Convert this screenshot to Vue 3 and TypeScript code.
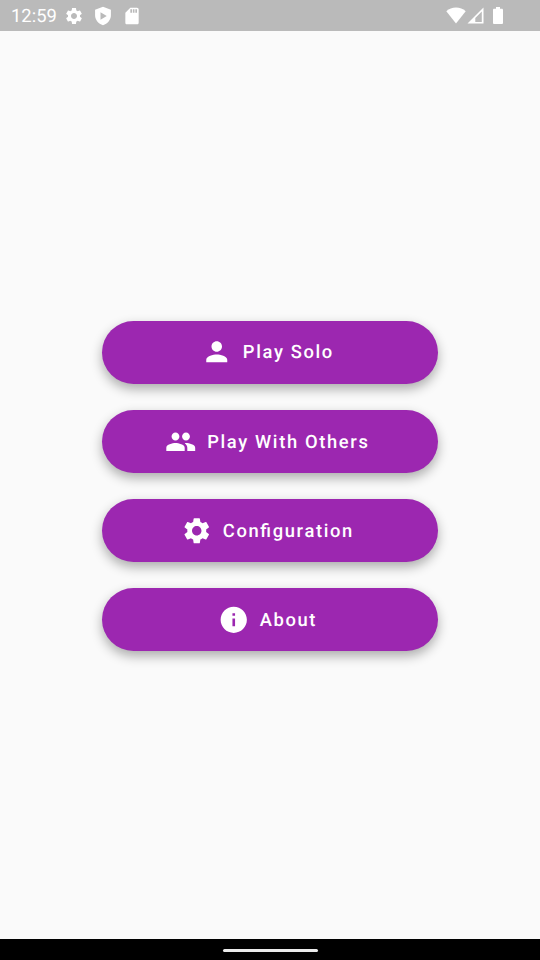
<script setup lang="ts">
interface MenuItem {
  label: string
  path: string
}

const gear =
  'M19.14 12.94c.04-.3.06-.61.06-.94 0-.32-.02-.64-.07-.94l2.03-1.58c.18-.14.23-.41.12-.61l-1.92-3.32c-.12-.22-.37-.29-.59-.22l-2.39.96c-.5-.38-1.03-.7-1.62-.94l-.36-2.54c-.04-.24-.24-.41-.48-.41h-3.84c-.24 0-.43.17-.47.41l-.36 2.54c-.59.24-1.13.57-1.62.94l-2.39-.96c-.22-.08-.47 0-.59.22L2.74 8.87c-.12.21-.08.47.12.61l2.03 1.58c-.05.3-.09.63-.09.94s.02.64.07.94l-2.03 1.58c-.18.14-.23.41-.12.61l1.92 3.32c.12.22.37.29.59.22l2.39-.96c.5.38 1.03.7 1.62.94l.36 2.54c.05.24.24.41.48.41h3.84c.24 0 .44-.17.47-.41l.36-2.54c.59-.24 1.13-.56 1.62-.94l2.39.96c.22.08.47 0 .59-.22l1.92-3.32c.12-.22.07-.47-.12-.61l-2.01-1.58zM12 15.6c-1.98 0-3.6-1.62-3.6-3.6s1.62-3.6 3.6-3.6 3.6 1.62 3.6 3.6-1.62 3.6-3.6 3.6z'

const items: MenuItem[] = [
  {
    label: 'Play Solo',
    path: 'M12 12c2.21 0 4-1.79 4-4s-1.79-4-4-4-4 1.79-4 4 1.79 4 4 4zm0 2c-2.67 0-8 1.34-8 4v2h16v-2c0-2.66-5.33-4-8-4z',
  },
  {
    label: 'Play With Others',
    path: 'M16 11c1.66 0 2.99-1.34 2.99-3S17.66 5 16 5c-1.66 0-3 1.34-3 3s1.34 3 3 3zm-8 0c1.66 0 2.99-1.34 2.99-3S9.66 5 8 5C6.34 5 5 6.34 5 8s1.34 3 3 3zm0 2c-2.33 0-7 1.17-7 3.5V19h14v-2.5c0-2.33-4.67-3.5-7-3.5zm8 0c-.29 0-.62.02-.97.05 1.16.84 1.97 1.97 1.97 3.45V19h6v-2.5c0-2.33-4.67-3.5-7-3.5z',
  },
  {
    label: 'Configuration',
    path: gear,
  },
  {
    label: 'About',
    path: 'M12 2C6.48 2 2 6.48 2 12s4.48 10 10 10 10-4.48 10-10S17.52 2 12 2zm1 15h-2v-6h2v6zm0-8h-2V7h2v2z',
  },
]
</script>

<template>
  <div class="screen">
    <header class="status">
      <span class="clock">12:59</span>
      <svg class="status-icon gear" viewBox="0 0 24 24"><path :d="gear" /></svg>
      <svg class="status-icon shield" viewBox="0 0 24 24">
        <path fill-rule="evenodd" d="M12 1 2.500 4.500V11c0 5.500 4 10.300 9.500 12 5.500-1.700 9.500-6.500 9.500-12V4.500L12 1zM9 7.500 16.500 12 9 16.500z" />
      </svg>
      <svg class="status-icon card" viewBox="0 0 24 24">
        <path d="M18 2h-8L4.020 8 4 20c0 1.100.9 2 2 2h12c1.100 0 2-.9 2-2V4c0-1.100-.9-2-2-2zm-6 6h-2V4h2v4zm3 0h-2V4h2v4zm3 0h-2V4h2v4z" />
      </svg>
      <span class="spacer"></span>
      <svg class="wifi" viewBox="0 0 20 17"><path d="M10 16.500.3 4.300C3 1.900 6.300.6 10 .6s7 1.300 9.700 3.700z" /></svg>
      <svg class="signal" viewBox="0 0 17 17"><path fill-rule="evenodd" d="M16.500.5v16H.5zM14.800 4.500 8.300 11v3.900h6.500z" /></svg>
      <svg class="battery" viewBox="0 0 10 17"><path d="M3 0h4v1.700h1.800c.7 0 1.200.5 1.200 1.200v12.800c0 .7-.5 1.300-1.200 1.300H1.200C.5 17 0 16.400 0 15.700V2.900c0-.7.5-1.200 1.200-1.200H3z" /></svg>
    </header>
    <main class="menu">
      <button v-for="item in items" :key="item.label" class="menu-button" type="button">
        <svg class="icon" viewBox="0 0 24 24"><path :d="item.path" /></svg>
        <span class="label">{{ item.label }}</span>
      </button>
    </main>
    <footer class="nav"><span class="handle"></span></footer>
  </div>
</template>

<style>
body {
  margin: 0;
}
</style>

<style scoped>
.screen {
  display: flex;
  flex-direction: column;
  width: 540px;
  height: 960px;
  overflow: hidden;
  background: #fafafa;
  font-family: Roboto, sans-serif;
  text-rendering: geometricPrecision;
}
svg {
  display: block;
  flex: none;
  fill: #fff;
}
.status {
  display: flex;
  align-items: center;
  flex: none;
  box-sizing: border-box;
  height: 31.300px;
  padding: 0 37px 0 11px;
  background: #bababa;
}
.clock {
  width: 53px;
  color: #fff;
  font-size: 18.400px;
  line-height: 22px;
  padding-top: 3px;
}
.status-icon {
  width: 20px;
  height: 20px;
}
.shield {
  margin-left: 9px;
}
.card {
  margin-left: 9px;
}
.spacer {
  flex: 1;
}
.wifi {
  width: 20px;
  height: 17px;
}
.signal {
  width: 17px;
  height: 17px;
  margin-left: 1px;
}
.battery {
  width: 10px;
  height: 17px;
  margin-left: 9px;
}
.menu {
  display: flex;
  flex: 1;
  flex-direction: column;
  align-items: center;
  justify-content: center;
  gap: 26.250px;
  padding-top: 2px;
}
.menu-button {
  display: flex;
  align-items: center;
  justify-content: center;
  gap: 10.500px;
  box-sizing: border-box;
  width: 336px;
  height: 63px;
  padding: 0 5.250px 0 0;
  border: 0;
  border-radius: 31.500px;
  background: #9c27b0;
  box-shadow: 0 5px 12px rgba(0, 0, 0, 0.32);
  color: #fff;
  font-family: inherit;
  font-size: 18.375px;
  font-weight: 500;
  letter-spacing: 1.640px;
  font-feature-settings: 'liga' 1;
  text-rendering: inherit;
}
.icon {
  width: 31.500px;
  height: 31.500px;
}
.label {
  padding-top: 1.500px;
}
.nav {
  display: flex;
  flex: none;
  align-items: center;
  justify-content: center;
  height: 21.300px;
  background: #000;
}
.handle {
  width: 95px;
  height: 3px;
  margin: 2px 0 0;
  border-radius: 1.500px;
  background: #ebebeb;
}
</style>
